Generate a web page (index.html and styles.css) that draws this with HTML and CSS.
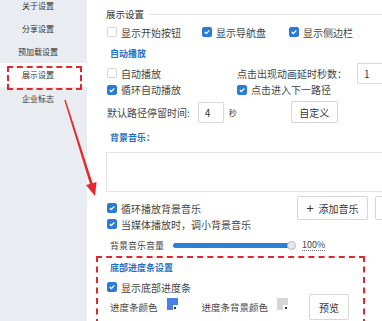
FILE: index.html
```html
<!DOCTYPE html>
<html lang="zh-CN">
<head>
<meta charset="utf-8">
<title>展示设置</title>
<link rel="stylesheet" href="styles.css">
</head>
<body>
<div class="app">
  <aside class="sidebar">
    <div class="nav-list">
      <div class="nav-item">关于设置</div>
      <div class="nav-item">分享设置</div>
      <div class="nav-item">预加载设置</div>
      <div class="nav-item active">展示设置</div>
      <div class="nav-item">企业标志</div>
    </div>
  </aside>

  <main class="main">
    <div class="section-title"><span>展示设置</span><i class="rule"></i></div>

    <div class="row row-1">
      <label class="check w96"><span class="cb"></span>显示开始按钮</label>
      <label class="check w87"><span class="cb on"><svg viewBox="0 0 10 10"><path d="M2.2 5.1 4.2 7 7.9 3"/></svg></span>显示导航盘</label>
      <label class="check"><span class="cb on"><svg viewBox="0 0 10 10"><path d="M2.2 5.1 4.2 7 7.9 3"/></svg></span>显示侧边栏</label>
    </div>

    <div class="label-blue h26">自动播放</div>

    <div class="grid2">
      <label class="check"><span class="cb"></span>自动播放</label>
      <div class="row"><span class="txt">点击出现动画延时秒数：</span><input class="num num-wide" type="text" value="1"></div>
      <label class="check"><span class="cb on"><svg viewBox="0 0 10 10"><path d="M2.2 5.1 4.2 7 7.9 3"/></svg></span>循环自动播放</label>
      <label class="check"><span class="cb on"><svg viewBox="0 0 10 10"><path d="M2.2 5.1 4.2 7 7.9 3"/></svg></span>点击进入下一路径</label>
    </div>

    <div class="row row-c">
      <span class="txt">默认路径停留时间:</span>
      <input class="num num-small" type="text" value="4">
      <span class="unit">秒</span>
      <button class="btn btn-custom" type="button">自定义</button>
    </div>

    <div class="label-blue h24">背景音乐：</div>
    <div class="music-box"></div>

    <div class="music-grid">
      <label class="check"><span class="cb on"><svg viewBox="0 0 10 10"><path d="M2.2 5.1 4.2 7 7.9 3"/></svg></span>循环播放背景音乐</label>
      <div class="btn-group">
        <button class="btn btn-add" type="button"><span class="plus">+</span>添加音乐</button>
        <button class="btn btn-more" type="button"></button>
      </div>
      <label class="check"><span class="cb on"><svg viewBox="0 0 10 10"><path d="M2.2 5.1 4.2 7 7.9 3"/></svg></span>当媒体播放时，调小背景音乐</label>
    </div>

    <div class="row row-vol">
      <span class="vol-label">背景音乐音量</span>
      <div class="slider"><span class="track"></span><span class="thumb"></span></div>
      <span class="pct">100%</span>
    </div>

    <section class="progress-box">
      <div class="label-blue h18">底部进度条设置</div>
      <div class="row h22">
        <label class="check"><span class="cb on"><svg viewBox="0 0 10 10"><path d="M2.2 5.1 4.2 7 7.9 3"/></svg></span>显示底部进度条</label>
      </div>
      <div class="row row-color">
        <span class="color-label">进度条颜色</span>
        <span class="swatch swatch-blue"></span>
        <span class="color-label gap24">进度条背景颜色</span>
        <span class="swatch swatch-gray"></span>
        <button class="btn btn-preview" type="button">预览</button>
      </div>
    </section>
  </main>

  <svg class="arrow" width="382" height="321" viewBox="0 0 382 321">
    <polygon points="64.33,100.2 65.67,99.8 92.61,183.14 96.54,181.96 95,196 86,185.12 89.93,183.94" fill="#e8262c"/>
  </svg>
</div>
</body>
</html>
```

FILE: styles.css
```css
* { box-sizing: border-box; }

html, body {
  margin: 0;
  padding: 0;
  background: #fff;
}

body {
  font-family: "Noto Sans CJK SC", "Noto Sans", "Liberation Sans", sans-serif;
  color: #3a3a3a;
  overflow: hidden;
}

.app {
  position: relative;
  display: flex;
  width: 382px;
  height: 321px;
  overflow: hidden;
}

/* sidebar */
.sidebar {
  width: 87px;
  flex: none;
  background: #e9ecf0;
}

.nav-list {
  margin-top: -6.65px;
}

.nav-item {
  position: relative;
  height: 23.3px;
  display: flex;
  align-items: center;
  justify-content: center;
  padding-right: 11px;
  font-size: 8px;
  color: #333;
  white-space: nowrap;
}

.nav-item.active {
  background: #fff;
}

.nav-item.active::after {
  content: "";
  position: absolute;
  left: 7px;
  top: 2.75px;
  width: 71px;
  height: 20px;
  border: 2px dashed #e0262e;
}

/* main */
.main {
  flex: 1;
  min-width: 0;
  padding-left: 20px;
  overflow: hidden;
}

.section-title {
  height: 20px;
  margin-top: 4px;
  margin-left: -1px;
  display: flex;
  align-items: center;
  font-size: 9.5px;
  color: #333;
}

.section-title .rule {
  flex: 1;
  height: 1px;
  background: #e2e2e2;
  margin-left: 5px;
}

.row {
  display: flex;
  align-items: center;
}

.row-1 { height: 16px; }
.w96 { width: 95px; }
.w87 { width: 87px; }

.check {
  display: flex;
  align-items: center;
  font-size: 10px;
  color: #444;
  white-space: nowrap;
}

.cb {
  flex: none;
  width: 10px;
  height: 10px;
  margin-right: 4px;
  border: 1px solid #d8d8d8;
  border-radius: 2px;
  background: #fff;
  display: flex;
}

.cb.on {
  background: #2b7bd6;
  border-color: #2b7bd6;
}

.cb svg {
  width: 8px;
  height: 8px;
}

.cb svg path {
  fill: none;
  stroke: #fff;
  stroke-width: 1.7;
}

.label-blue {
  display: flex;
  align-items: center;
  padding-left: 3px;
  font-size: 9px;
  font-weight: bold;
  color: #1f6fc5;
  white-space: nowrap;
}

.h26 { height: 26px; }
.h24 { height: 24px; }
.h18 { height: 18px; }
.h22 { height: 22px; }

.grid2 {
  display: grid;
  grid-template-columns: 130px auto;
  grid-template-rows: 14px 19px;
  align-items: center;
}

.txt {
  font-size: 10px;
  color: #444;
  white-space: nowrap;
}

.num {
  flex: none;
  height: 21px;
  border: 1px solid #d9d9d9;
  border-radius: 1px;
  padding: 0 0 0 6px;
  font-family: inherit;
  font-size: 10px;
  color: #333;
  background: #fff;
  outline: none;
}

.num-wide {
  width: 40px;
  margin-left: 10px;
}

.num-small {
  width: 26px;
  margin-left: 8px;
}

.row-c { height: 26px; }

.unit {
  margin-left: 5px;
  font-size: 8px;
  color: #444;
}

.btn {
  flex: none;
  border: 1px solid #d6d6d6;
  border-radius: 2px;
  background: #fff;
  font-family: inherit;
  font-size: 10px;
  color: #333;
  padding: 0;
}

.btn-custom {
  width: 47px;
  height: 22px;
  margin-left: 54px;
}

.music-box {
  margin-top: 3px;
  margin-left: -1px;
  width: 300px;
  height: 40px;
  border: 1px solid #e4e4e4;
}

.music-grid {
  margin-top: 8px;
  display: grid;
  grid-template-columns: 190px auto;
  grid-template-rows: 16px 16px;
  align-items: center;
}

.btn-group {
  display: flex;
  align-items: center;
}

.btn-add {
  width: 71px;
  height: 24px;
  display: flex;
  align-items: center;
  justify-content: center;
}

.plus {
  font-size: 13px;
  line-height: 1;
  margin-right: 5px;
  margin-top: -1px;
}

.btn-more {
  width: 60px;
  height: 24px;
  margin-left: 7px;
}

.row-vol {
  margin-top: 5px;
  height: 16px;
}

.vol-label {
  padding-left: 3px;
  font-size: 9px;
  color: #444;
  white-space: nowrap;
}

.slider {
  display: flex;
  align-items: center;
  margin-left: 9px;
}

.track {
  width: 119px;
  height: 5px;
  border-radius: 3px;
  background: #2f7fd6;
}

.thumb {
  width: 9px;
  height: 9px;
  margin-left: -5px;
  border-radius: 50%;
  background: #e8e8e8;
  border: 1px solid #b9b9b9;
}

.pct {
  margin-left: 6px;
  font-size: 9px;
  color: #444;
  line-height: 10px;
  border-bottom: 1px dotted #777;
}

.progress-box {
  margin-top: 3px;
  margin-left: -11px;
  width: 269px;
  height: 90px;
  border: 2px dashed #e0262e;
  padding-left: 9px;
}

.row-color { height: 18px; }

.color-label {
  padding-left: 3px;
  font-size: 9.5px;
  color: #444;
  white-space: nowrap;
}

.gap24 { margin-left: 21px; }

.swatch {
  position: relative;
  flex: none;
  align-self: flex-start;
  width: 11px;
  height: 12px;
  margin-left: 9px;
}

.swatch-blue { background: #4a80e6; }
.swatch-gray { background: #d6d6d6; }

.swatch::after {
  content: "";
  position: absolute;
  right: 0;
  bottom: 0;
  width: 5px;
  height: 5px;
  background: #fff;
}

.swatch::before {
  content: "";
  position: absolute;
  right: 1.5px;
  bottom: 1.5px;
  width: 2px;
  height: 2px;
  background: #333;
  z-index: 1;
}

.btn-preview {
  width: 40px;
  height: 26px;
  margin-left: 21px;
}

.arrow {
  position: absolute;
  left: 0;
  top: 0;
  pointer-events: none;
}
```
